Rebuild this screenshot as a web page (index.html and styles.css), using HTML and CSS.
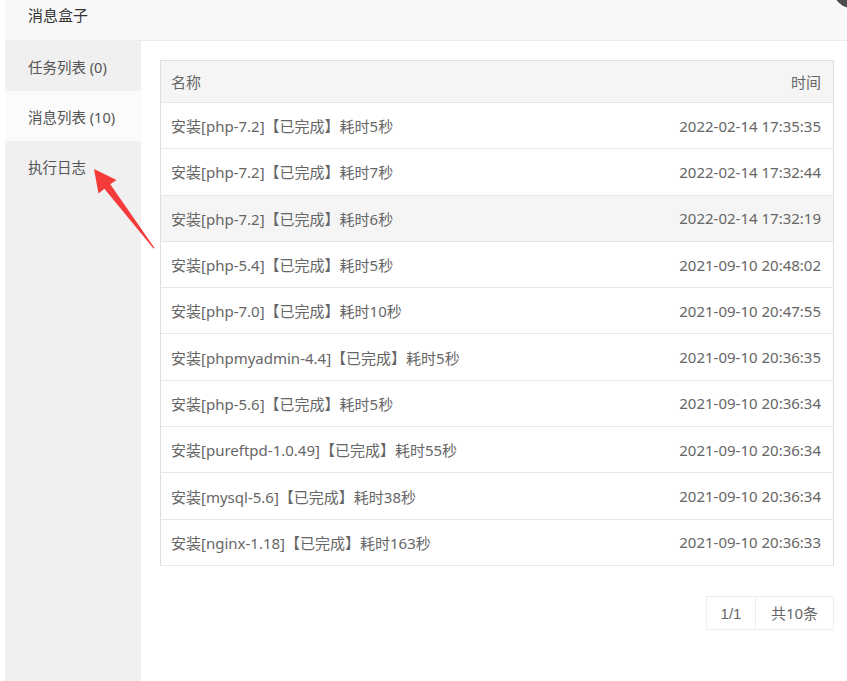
FILE: index.html
```
<!DOCTYPE html>
<html>
    <head>
        <title>消息盒子</title>
    <link rel="stylesheet" href="styles.css">
    </head>
    <body>
        <div class="layer">
            <div class="layer-title">消息盒子</div>
            <span class="layer-close"></span>
            <div class="layer-body">
                <ul class="side-menu">
                    <li>任务列表 (0)</li>
                    <li class="active">消息列表 (10)</li>
                    <li>执行日志</li>
                </ul>
                <div class="content">
                    <table class="msg-table">
                        <thead>
                            <tr><th>名称</th><th class="time">时间</th></tr>
                        </thead>
                        <tbody>
                            <tr><td>安装[php-7.2]【已完成】耗时5秒</td><td class="time">2022-02-14 17:35:35</td></tr>
                            <tr><td>安装[php-7.2]【已完成】耗时7秒</td><td class="time">2022-02-14 17:32:44</td></tr>
                            <tr class="hover"><td>安装[php-7.2]【已完成】耗时6秒</td><td class="time">2022-02-14 17:32:19</td></tr>
                            <tr><td>安装[php-5.4]【已完成】耗时5秒</td><td class="time">2021-09-10 20:48:02</td></tr>
                            <tr><td>安装[php-7.0]【已完成】耗时10秒</td><td class="time">2021-09-10 20:47:55</td></tr>
                            <tr><td>安装[phpmyadmin-4.4]【已完成】耗时5秒</td><td class="time">2021-09-10 20:36:35</td></tr>
                            <tr><td>安装[php-5.6]【已完成】耗时5秒</td><td class="time">2021-09-10 20:36:34</td></tr>
                            <tr><td>安装[pureftpd-1.0.49]【已完成】耗时55秒</td><td class="time">2021-09-10 20:36:34</td></tr>
                            <tr><td>安装[mysql-5.6]【已完成】耗时38秒</td><td class="time">2021-09-10 20:36:34</td></tr>
                            <tr><td>安装[nginx-1.18]【已完成】耗时163秒</td><td class="time">2021-09-10 20:36:33</td></tr>
                        </tbody>
                    </table>
                    <div class="pager">
                        <span class="page-num">1/1</span>
                        <span class="page-total">共10条</span>
                    </div>
                </div>
            </div>
        </div>
        <svg class="arrow" width="847" height="681" viewBox="0 0 847 681">
            <polygon points="94,169 116.5,180 110.3,184.3 154.5,248 153.5,248.5 104.4,188.7 98.5,193.5" fill="#f53a3a"/>
        </svg>
    </body>
</html>
```
FILE: styles.css
```
:root {
    --text: #666;
    --line: #e6e6e6;
}
html, body {
    margin: 0;
    padding: 0;
    height: 100%;
    background-color: #fff;
    font-family: "Noto Sans", "Noto Sans CJK SC", sans-serif;
    color: var(--text);
    overflow: hidden;
}
.layer {
    margin-left: 5px;
    height: 100%;
    display: flex;
    flex-direction: column;
    position: relative;
}
.layer-title {
    height: 40px;
    line-height: 31px;
    padding-left: 23px;
    background-color: #f8f8f8;
    border-bottom: 1px solid #ececec;
    font-size: 15px;
    color: #333;
}
.layer-close {
    position: absolute;
    top: -32px;
    right: -26px;
    width: 38px;
    height: 38px;
    border-radius: 50%;
    background-color: #4d4d4d;
    border: 2px solid #fff;
}
.layer-body {
    flex: 1;
    display: flex;
}
.side-menu {
    list-style: none;
    margin: 0;
    padding: 0;
    width: 136px;
    background-color: #f0f0f0;
}
.side-menu li {
    height: 50px;
    line-height: 52px;
    padding-left: 23px;
    font-size: 14.5px;
    color: #555;
}
.side-menu li.active {
    background-color: #fbfbfb;
}
.content {
    flex: 1;
    padding: 19px 13px 0 19px;
}
.msg-table {
    width: 100%;
    border-collapse: collapse;
    border: 1px solid #dedede;
    font-size: 15px;
}
.msg-table th, .msg-table td {
    text-align: left;
    font-weight: normal;
    padding: 0 12px 0 10px;
    border-bottom: 1px solid var(--line);
    white-space: nowrap;
}
.msg-table th {
    height: 41px;
    background-color: #f5f5f5;
}
.msg-table td {
    height: 45.3px;
}
.msg-table .time {
    text-align: right;
}
.msg-table tr.hover td {
    background-color: #f5f5f5;
}
.pager {
    display: flex;
    justify-content: flex-end;
    margin-top: 30px;
}
.pager span {
    height: 32px;
    line-height: 33px;
    border: 1px solid #eee;
    font-size: 15px;
    text-align: center;
}
.page-num {
    width: 48px;
    font-family: "Liberation Sans", sans-serif;
}
.page-total {
    width: 77px;
    border-left: 0 !important;
}
.arrow {
    position: absolute;
    left: 0;
    top: 0;
    pointer-events: none;
}
```
